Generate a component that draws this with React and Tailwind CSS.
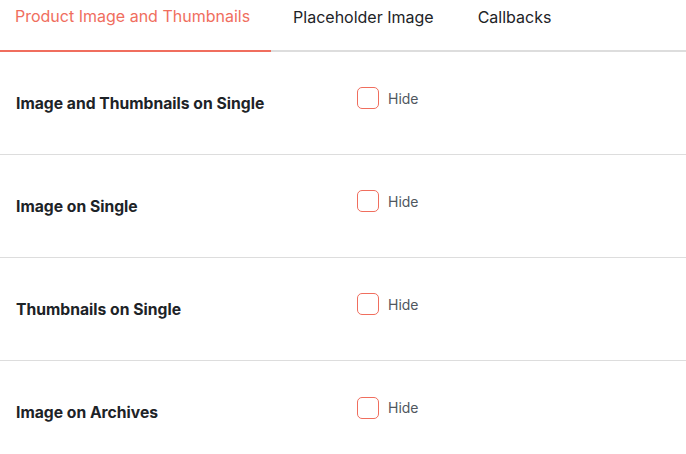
import { useState } from 'react'

const tabs = ['Product Image and Thumbnails', 'Placeholder Image', 'Callbacks']

const rows = [
    'Image and Thumbnails on Single',
    'Image on Single',
    'Thumbnails on Single',
    'Image on Archives',
]

const Row = ({ label, last }) => {
    const [checked, setChecked] = useState(false)

    return (
        <div className={`flex h-[103px] items-center ${last ? '' : 'border-b border-[#dddddd]'}`}>
            <div className="w-[357px] pl-4 pt-[1px] text-[15.7px] font-bold text-[#1d2327]">
                {label}
            </div>
            <label className="flex items-center gap-[9px] mb-[10px] cursor-pointer">
                <span
                    onClick={() => setChecked(!checked)}
                    className="block h-[22px] w-[22px] rounded-[5px] border border-[#f06e5e] bg-white"
                />
                <span className="text-[14px] text-[#50575e]">Hide</span>
            </label>
        </div>
    )
}

export default function App() {
    const [active, setActive] = useState(0)

    return (
        <div className="h-[454px] w-[686px] bg-white font-['Inter',sans-serif]">
            <div className="flex h-[52px] border-b-2 border-[#dddddd]">
                {tabs.map((t, idx) => (
                    <button
                        key={idx}
                        onClick={() => setActive(idx)}
                        className={`-mb-[2px] h-[52px] pb-[18px] text-[16px] ${idx === 0 ? 'pl-[15px] pr-[21px]' : 'px-[22px]'} ${idx === active ? 'border-b-2 border-[#f06e5e] text-[#f06e5e]' : 'text-[#1d2327]'}`}
                    >
                        {t}
                    </button>
                ))}
            </div>
            {rows.map((r, idx) => (
                <Row key={idx} label={r} last={idx === rows.length - 1} />
            ))}
        </div>
    )
}
